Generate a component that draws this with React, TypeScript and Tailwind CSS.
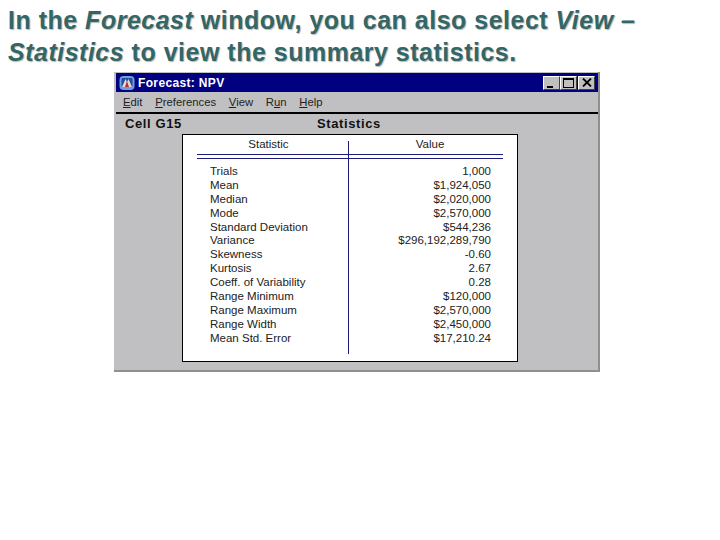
const rows: [string, string][] = [
  ["Trials", "1,000"],
  ["Mean", "$1,924,050"],
  ["Median", "$2,020,000"],
  ["Mode", "$2,570,000"],
  ["Standard Deviation", "$544,236"],
  ["Variance", "$296,192,289,790"],
  ["Skewness", "-0.60"],
  ["Kurtosis", "2.67"],
  ["Coeff. of Variability", "0.28"],
  ["Range Minimum", "$120,000"],
  ["Range Maximum", "$2,570,000"],
  ["Range Width", "$2,450,000"],
  ["Mean Std. Error", "$17,210.24"],
];

function Menu({ k, rest }: { k: string; rest: string }) {
  return (
    <span>
      <span className="underline">{k}</span>
      {rest}
    </span>
  );
}

function Btn({ children }: { children: React.ReactNode }) {
  return (
    <div className="w-[17px] h-[14px] bg-[#c0c0c0] border-t border-l border-t-white border-l-white border-r border-b border-r-[#404040] border-b-[#404040] flex items-center justify-center">
      {children}
    </div>
  );
}

export default function App() {
  return (
    <div className="w-[720px] h-[540px] bg-white overflow-hidden font-['Liberation_Sans',sans-serif]">
      <h1 className="pl-2 pt-[4px] text-[25px] leading-[32px] font-bold tracking-[0.5px] text-[#336666] [text-shadow:1px_1px_1px_#b8b8b8] whitespace-nowrap h-[72px]">
        In the <em>Forecast</em> window, you can also select <em>View –</em>
        <br />
        <em>Statistics</em> to view the summary statistics.
      </h1>
      <div className="ml-[114px] w-[486px] h-[300px] bg-[#c0c0c2] border-r-2 border-b-2 border-[#8f8f8f] pl-[2px] pt-[1px]">
        <div className="h-[19px] w-[482px] bg-[#000080] flex items-center pl-[3px] pr-[3px] text-white">
          <svg width="16" height="16" viewBox="0 0 16 16" className="shrink-0">
            <rect x="0.5" y="1" width="15" height="14" rx="4" fill="#6f9fd8" />
            <rect x="2.5" y="3" width="11" height="9" rx="1" fill="#1f4f9f" />
            <path d="M3 12 L6.5 4 L8 7 L9.5 4 L13 12 Z" fill="#e8d8d0" />
            <path d="M6 12 L8 6 L10 12 Z" fill="#b03040" />
          </svg>
          <span className="ml-[3px] text-[12px] font-bold tracking-[0.35px]">Forecast: NPV</span>
          <div className="ml-auto flex items-center">
            <Btn>
              <span className="w-[6px] h-[2px] bg-black mt-[8px] mr-[3px]" />
            </Btn>
            <Btn>
              <span className="w-[11px] h-[10px] border border-black border-t-2" />
            </Btn>
            <div className="ml-[1px]">
              <Btn>
                <svg width="10" height="9" viewBox="0 0 10 9">
                  <path d="M1 0.5 L9 8.5 M9 0.5 L1 8.5" stroke="#000" strokeWidth="1.8" />
                </svg>
              </Btn>
            </div>
          </div>
        </div>
        <div className="h-[22px] w-[482px] flex items-center pl-[7px] gap-[12.7px] text-[11.3px] text-[#222] border-b-2 border-b-black">
          <Menu k="E" rest="dit" />
          <Menu k="P" rest="references" />
          <Menu k="V" rest="iew" />
          <span>
            R<span className="underline">u</span>n
          </span>
          <Menu k="H" rest="elp" />
        </div>
        <div className="w-[482px] h-[20px] relative flex items-center text-[13px] font-bold tracking-[0.6px] text-[#111]">
          <span className="ml-[9px]">Cell G15</span>
          <span className="absolute left-[201px]">Statistics</span>
        </div>
        <div className="relative ml-[66px] w-[336px] h-[228px] bg-white border border-black text-[11.5px] text-[#222]">
          <div className="absolute left-[165px] top-[6px] h-[213px] w-px bg-[#1c1c78]" />
          <div className="flex h-[19px] items-center pt-[1px]">
            <span className="w-[171px] text-center">Statistic</span>
            <span className="w-[152px] text-center">Value</span>
          </div>
          <div className="ml-[14px] w-[306px] h-[5px] border-y border-[#1c1c78]" />
          <div className="pl-[27px] pr-[26px] pt-[5px]">
            {rows.map(([a, b]) => (
              <div key={a} className="flex justify-between h-[13.9px] leading-[14px]">
                <span>{a}</span>
                <span>{b}</span>
              </div>
            ))}
          </div>
        </div>
      </div>
    </div>
  );
}
